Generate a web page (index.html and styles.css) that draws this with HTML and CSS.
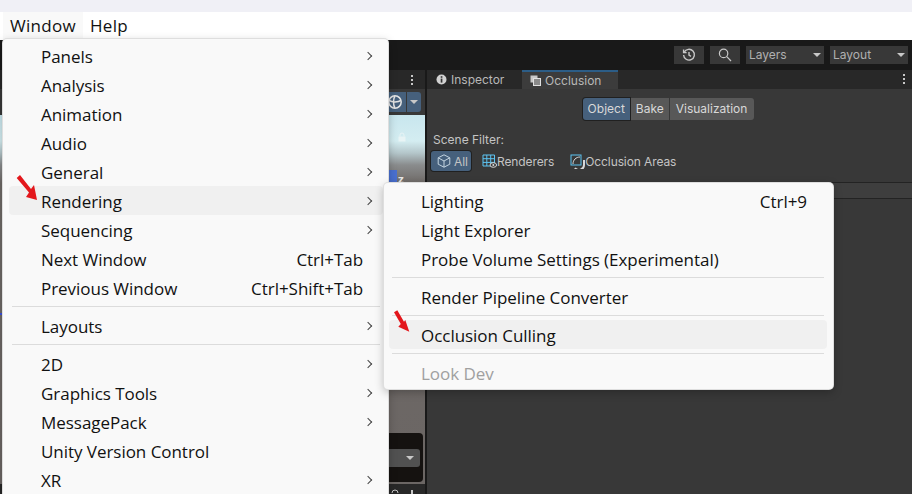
FILE: index.html
```html
<!DOCTYPE html>
<html lang="en">
<head>
  <meta charset="UTF-8" />
  <title>Unity Window menu</title>
  <link rel="stylesheet" href="styles.css">
</head>
<body>

  <div class="topstrip"></div>

  <nav class="menubar">
    <span class="menubar-item open">Window</span>
    <span class="menubar-item">Help</span>
  </nav>

  <div class="editor">
    <div class="toolbar">
      <button class="tool-btn">
        <svg width="14" height="14" viewBox="0 0 14 14" fill="none" stroke="#c8c8c8" stroke-width="1.4"><path d="M2.2 4.2A5.4 5.4 0 1 1 1.6 7"/><path d="M1.6 1.6v3h3"/><path d="M7 4v3.2l2 1.2"/></svg>
      </button>
      <button class="tool-btn">
        <svg width="14" height="14" viewBox="0 0 14 14" fill="none" stroke="#c8c8c8" stroke-width="1.2"><circle cx="5.6" cy="5.4" r="4.2"/><path d="M8.8 8.6l4.2 4.4"/></svg>
      </button>
      <div class="tool-drop">Layers<i class="caret"></i></div>
      <div class="tool-drop">Layout<i class="caret"></i></div>
    </div>

    <div class="panes">
      <div class="scene">
        <div class="scene-head">
          <span class="dots"><b></b><b></b><b></b></span>
        </div>
        <div class="scene-tools">
          <span class="gizmo-btn">
            <svg width="16" height="16" viewBox="0 0 16 16" fill="none" stroke="#e4e4e4" stroke-width="1.5"><circle cx="8" cy="8" r="6.2"/><path d="M2 6.400c3 2 9 2 12 0M8 2c-2 3-2 9 0 12"/></svg>
          </span>
          <span class="gizmo-caret"><i class="caret"></i></span>
        </div>
        <div class="scene-view">
          <svg class="lock" width="8" height="10" viewBox="0 0 8 10"><path d="M2 4.500V3a2 2 0 0 1 4 0v1.500" fill="none" stroke="#f2f8f8" stroke-width="1"/><rect x="0.5" y="4.500" width="7" height="5" fill="#f2f8f8"/></svg>
          <div class="cube"></div>
          <span class="axis">z</span>
          <div class="tick"></div>
          <div class="overlay-box"><div class="overlay-drop"><i class="caret"></i></div></div>
        </div>
        <div class="scene-foot">
          <svg width="8" height="6" viewBox="0 0 8 6" fill="none" stroke="#c8c8c8" stroke-width="1"><path d="M1 5a3 3 0 0 1 6 0"/></svg>
          <span class="dot"></span>
        </div>
      </div>

      <div class="inspector">
        <div class="tabs">
          <div class="tab">
            <svg width="11" height="11" viewBox="0 0 11 11"><circle cx="5.500" cy="5.500" r="5" fill="#d2d2d2"/><rect x="4.700" y="4.600" width="1.700" height="4" fill="#333"/><rect x="4.700" y="2.200" width="1.700" height="1.600" fill="#333"/></svg>
            Inspector
          </div>
          <div class="tab active">
            <svg width="11" height="11" viewBox="0 0 11 11"><rect x="0.5" y="0.5" width="7" height="7" fill="#c8c8c8"/><rect x="3.500" y="3.500" width="7" height="7" fill="#8a8a8a" stroke="#e0e0e0"/></svg>
            Occlusion
          </div>
          <span class="dots tab-dots"><b></b><b></b><b></b></span>
        </div>

        <div class="segment">
          <span class="seg selected">Object</span>
          <span class="seg">Bake</span>
          <span class="seg">Visualization</span>
        </div>

        <div class="filter-label">Scene Filter:</div>
        <div class="filters">
          <span class="filter selected">
            <svg width="14" height="14" viewBox="0 0 14 14" fill="none" stroke="#c4d4e0" stroke-width="1"><path d="M7 .8l5.800 3v6.400L7 13.200l-5.800-3V3.800z"/><path d="M1.200 3.800L7 7l5.800-3.200M7 7v6.200"/></svg>
            All
          </span>
          <span class="filter">
            <svg width="15" height="14" viewBox="0 0 15 14" fill="none"><path d="M1 1h11.500v11H1zM1 4.700h11.500M1 8.400h11.500M4.800 1v11M8.700 1v11" stroke="#5cc4f2" stroke-width="1"/><ellipse cx="11.300" cy="11" rx="3.300" ry="2.300" fill="#3a3a3a" stroke="#d8d8d8"/><circle cx="11.300" cy="11" r="1" fill="#d8d8d8"/></svg>
            Renderers
          </span>
          <span class="filter areas">
            <svg width="15" height="15" viewBox="0 0 15 15" fill="none"><path d="M5 14a5 5 0 0 0 9-3V6" stroke="#d8d8d8" stroke-width="2"/><rect x="1" y="1" width="10" height="10" stroke="#5cc4f2"/><path d="M3 10c0-4 3-7 7-7" stroke="#d8d8d8"/></svg>
            Occlusion Areas
          </span>
        </div>
        <div class="inspector-rule"></div>
      </div>
    </div>
  </div>

  <!-- main dropdown -->
  <div class="menu window-menu">
    <div class="item sub">Panels</div>
    <div class="item sub">Analysis</div>
    <div class="item sub">Animation</div>
    <div class="item sub">Audio</div>
    <div class="item sub">General</div>
    <div class="item sub hot">Rendering</div>
    <div class="item sub">Sequencing</div>
    <div class="item">Next Window<span class="key">Ctrl+Tab</span></div>
    <div class="item">Previous Window<span class="key">Ctrl+Shift+Tab</span></div>
    <div class="sep"></div>
    <div class="item sub">Layouts</div>
    <div class="sep"></div>
    <div class="item sub">2D</div>
    <div class="item sub">Graphics Tools</div>
    <div class="item sub">MessagePack</div>
    <div class="item">Unity Version Control</div>
    <div class="item sub">XR</div>
  </div>

  <!-- rendering submenu -->
  <div class="menu render-menu">
    <div class="item">Lighting<span class="key">Ctrl+9</span></div>
    <div class="item">Light Explorer</div>
    <div class="item">Probe Volume Settings (Experimental)</div>
    <div class="sep"></div>
    <div class="item">Render Pipeline Converter</div>
    <div class="sep"></div>
    <div class="item hot">Occlusion Culling</div>
    <div class="sep"></div>
    <div class="item disabled">Look Dev</div>
  </div>

  <svg class="arrow arrow-one" width="23" height="27" viewBox="0 0 23 27"><path d="M1.700 4L5 1l11 14 3-4 3 15-11-3 3-4.500z" fill="#e3171c"/></svg>
  <svg class="arrow arrow-two" width="18" height="24" viewBox="0 0 18 24"><path d="M1 3.200L4.300 1.300 11 12.800 12.300 11 16.300 22.700 5.300 17.700 7.800 15z" fill="#e3171c"/></svg>

</body>
</html>
```

FILE: styles.css
```css
* {
  box-sizing: border-box;
  margin: 0;
  padding: 0;
}
html, body {
  width: 100%;
  height: 100%;
  overflow: hidden;
}
body {
  position: relative;
  display: flex;
  flex-direction: column;
  background: #383838;
  font-family: "Open Sans", "Noto Sans", sans-serif;
}

/* title strip and menu bar */
.topstrip {
  height: 12px;
  background: #f0f0f6;
}
.menubar {
  height: 28px;
  display: flex;
  background: #fff;
  padding-left: 3px;
  font-size: 17px;
  letter-spacing: 0.3px;
  color: #111;
}
.menubar-item {
  padding: 0 7px;
  line-height: 28px;
}
.menubar-item.open {
  background: #f9f9f9;
}

/* unity editor behind the menus */
.editor {
  flex: 1;
  display: flex;
  flex-direction: column;
  font-family: Inter, "Noto Sans", sans-serif;
  font-size: 12px;
  color: #c4c4c4;
  min-height: 0;
}
.toolbar {
  height: 30px;
  display: flex;
  justify-content: flex-end;
  align-items: center;
  gap: 6px;
  padding: 0 4px 0 0;
  background: #191919;
}
.tool-btn {
  width: 30px;
  height: 18px;
  display: flex;
  align-items: center;
  justify-content: center;
  background: #383838;
  border: none;
}
.tool-drop {
  position: relative;
  width: 78px;
  height: 18px;
  line-height: 18px;
  padding-left: 3px;
  background: #383838;
  color: #b0b0b0;
}
.caret {
  display: block;
  width: 0;
  height: 0;
  border-left: 4px solid transparent;
  border-right: 4px solid transparent;
  border-top: 4px solid #c8c8c8;
}
.tool-drop .caret {
  position: absolute;
  right: 3px;
  top: 7px;
}

.panes {
  flex: 1;
  display: flex;
  gap: 2px;
  min-height: 0;
  background: #191919;
}
.scene {
  width: 425px;
  display: flex;
  flex-direction: column;
  background: #383838;
  border-radius: 3px 3px 0 0;
}
.scene-head {
  height: 19px;
  display: flex;
  justify-content: flex-end;
  align-items: center;
  padding-right: 12px;
  background: #282828;
}
.dots {
  display: flex;
  flex-direction: column;
  gap: 2px;
}
.dots b {
  display: block;
  width: 2px;
  height: 2px;
  background: #c8c8c8;
}
.scene-tools {
  height: 26px;
  display: flex;
  justify-content: flex-end;
  align-items: center;
  gap: 1px;
  padding-right: 4px;
}
.gizmo-btn {
  height: 20px;
  width: 22px;
  display: flex;
  align-items: center;
  justify-content: center;
  background: #46607c;
}
.gizmo-caret {
  height: 20px;
  width: 14px;
  display: flex;
  align-items: center;
  justify-content: center;
  background: #46607c;
  border-radius: 0 3px 3px 0;
}
.scene-view {
  position: relative;
  flex: 1;
  background: linear-gradient(#c8e6ee 0, #d4edf1 26px, #b4c6ca 38px, #8a8c8d 50px, #6f6a67 68px, #6b6664 100%);
}
.lock {
  position: absolute;
  right: 19px;
  top: 17px;
  opacity: 0.7;
}
.cube {
  position: absolute;
  right: 28px;
  top: 55px;
  width: 22px;
  height: 20px;
  background: #4a70d0;
}
.axis {
  position: absolute;
  right: 21px;
  top: 57px;
  font-weight: 700;
  font-size: 11px;
  color: #e8e8e8;
}
.tick {
  position: absolute;
  left: 0;
  top: 198px;
  width: 3px;
  height: 2px;
  background: #3a50e0;
}
.overlay-box {
  position: absolute;
  right: 2px;
  top: 318px;
  width: 40px;
  height: 49px;
  padding: 16px 3px 0 0;
  background: #151210;
  border-radius: 4px;
}
.overlay-drop {
  height: 18px;
  display: flex;
  align-items: center;
  justify-content: flex-end;
  padding-right: 6px;
  background: #515151;
  border-radius: 3px;
}
.scene-foot {
  height: 10px;
  display: flex;
  justify-content: flex-end;
  align-items: flex-end;
  gap: 12px;
  padding: 0 12px 0 0;
  background: #282828;
}
.dot {
  width: 2px;
  height: 4px;
  background: #c8c8c8;
}

.inspector {
  flex: 1;
  display: flex;
  flex-direction: column;
  background: #383838;
  border-radius: 3px 3px 0 0;
}
.tabs {
  height: 19px;
  display: flex;
  align-items: stretch;
  position: relative;
  background: #282828;
  color: #b8b8b8;
}
.tab {
  width: 95px;
  display: flex;
  align-items: center;
  gap: 4px;
  padding-left: 9px;
}
.tab.active {
  width: 96px;
  background: #3c3c3c;
  border-top: 2px solid #2c5d87;
  padding-left: 8px;
}
.tab-dots {
  position: absolute;
  right: 7px;
  top: 4px;
}
.segment {
  display: flex;
  justify-content: center;
  margin-top: 9px;
  padding-right: 2px;
  gap: 1px;
}
.seg {
  height: 22px;
  line-height: 22px;
  padding: 0 5px;
  background: #585858;
  color: #d8d8d8;
}
.seg.selected {
  background: #46607c;
  border-radius: 3px 0 0 3px;
  box-shadow: 0 0 0 1px #202020;
}
.seg:last-child {
  padding: 0 7px 0 6px;
  border-radius: 0 3px 3px 0;
}
.filter-label {
  margin: 12px 0 0 6px;
  line-height: 15px;
}
.filters {
  display: flex;
  align-items: center;
  margin: 4px 0 0 4px;
  gap: 11px;
  letter-spacing: -0.1px;
}
.filter {
  display: flex;
  align-items: center;
  height: 20px;
}
.filter.selected {
  width: 40px;
  padding-left: 6px;
  gap: 3px;
  background: #46607c;
  border-radius: 3px;
  box-shadow: 0 0 0 1px #202020;
}
.filter.areas {
  margin-left: 5px;
}
.inspector-rule {
  margin-top: 11px;
  height: 17px;
  background: #3e3e3e;
  border-top: 1px solid #232323;
  border-bottom: 1px solid #232323;
}

/* popup menus float over the editor */
.menu {
  position: absolute;
  background: #f9f9f9;
  border-radius: 4px;
  box-shadow: 0 0 0 1px #dedede, 0 3px 10px rgba(0, 0, 0, 0.28);
  font-size: 17px;
  letter-spacing: -0.04px;
  color: #111;
}
.window-menu {
  left: 3px;
  top: 39px;
  width: 385px;
  height: 470px;
  padding: 2px 5px 2px 6px;
}
.render-menu {
  left: 384px;
  top: 183px;
  width: 449px;
  padding: 3px 6px 2px 5px;
}
.item {
  position: relative;
  height: 29px;
  line-height: 31px;
  padding-left: 32px;
  border-radius: 4px;
  white-space: nowrap;
}
.item.hot {
  background: #f0f0f0;
}
.item.disabled {
  color: #a0a0a0;
}
.item .key {
  position: absolute;
  right: 20px;
  top: 0;
}
.item.sub::after {
  content: "";
  position: absolute;
  right: 12px;
  top: 12px;
  width: 5px;
  height: 5px;
  border-top: 1px solid #444;
  border-right: 1px solid #444;
  transform: rotate(45deg);
}
.sep {
  height: 1px;
  margin: 4px 3px;
  background: #dcdcdc;
}
.arrow {
  position: absolute;
}
.arrow-one {
  left: 15px;
  top: 174px;
}
.arrow-two {
  left: 393px;
  top: 309px;
}
```
